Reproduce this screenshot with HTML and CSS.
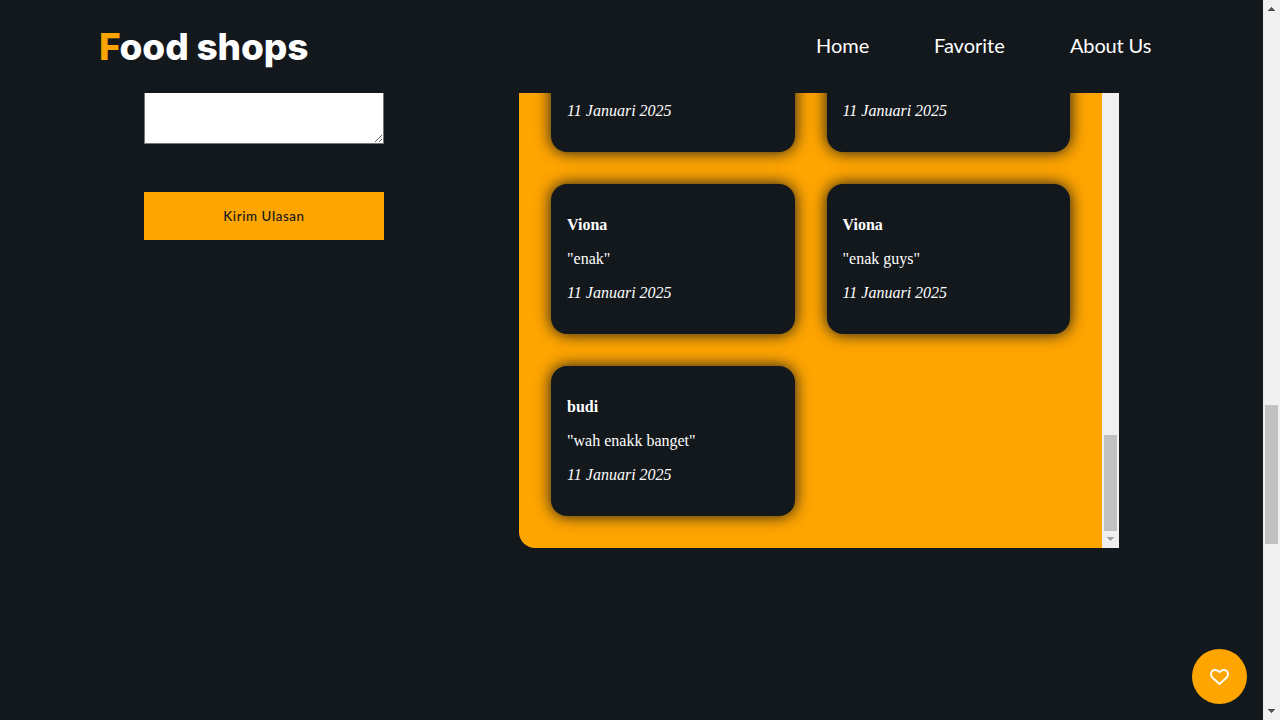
FILE: index.html
```html
<!DOCTYPE html>
<html lang="id">
<head>
<meta charset="utf-8">
<title>Food shops</title>
<link rel="stylesheet" href="styles.css">
</head>
<body>
<div class="page">
  <header class="header">
    <h1 class="brand"><span class="brand-initial">F</span>ood shops</h1>
    <nav class="nav">
      <a class="nav-home">Home</a>
      <a class="nav-favorite">Favorite</a>
      <a class="nav-about">About Us</a>
    </nav>
  </header>
  <main class="content">
    <form class="review-form">
      <textarea class="review-input" aria-label="Ulasan"></textarea>
      <button class="submit" type="button"><span>Kirim Ulasan</span></button>
    </form>
    <section class="reviews">
      <div class="review-grid">
        <article class="card card-cut"><p class="date">11 Januari 2025</p></article>
        <article class="card card-cut"><p class="date">11 Januari 2025</p></article>
        <article class="card"><p class="name">Viona</p><p class="text">"enak"</p><p class="date">11 Januari 2025</p></article>
        <article class="card"><p class="name">Viona</p><p class="text">"enak guys"</p><p class="date">11 Januari 2025</p></article>
        <article class="card"><p class="name">budi</p><p class="text">"wah enakk banget"</p><p class="date">11 Januari 2025</p></article>
      </div>
      <div class="track inner-track">
        <div class="thumb inner-thumb"></div>
        <svg class="arrow" width="7" height="4" viewBox="0 0 7 4" shape-rendering="crispEdges"><path fill="#a3a3a3" d="M0 0h7v1H0zM1 1h5v1H1zM2 2h3v1H2zM3 3h1v1H3z"/></svg>
      </div>
    </section>
  </main>
</div>
<div class="track page-track">
  <svg class="arrow" width="7" height="4" viewBox="0 0 7 4" shape-rendering="crispEdges"><path fill="#505050" d="M3 0h1v1H3zM2 1h3v1H2zM1 2h5v1H1zM0 3h7v1H0z"/></svg>
  <div class="thumb page-thumb"></div>
  <svg class="arrow" width="7" height="4" viewBox="0 0 7 4" shape-rendering="crispEdges"><path fill="#505050" d="M0 0h7v1H0zM1 1h5v1H1zM2 2h3v1H2zM3 3h1v1H3z"/></svg>
</div>
<button class="like" type="button" aria-label="Favorite">
  <svg class="heart" width="19" height="16" viewBox="0 0 20 17" fill="none" stroke="#fff" stroke-width="2" stroke-linejoin="round"><path d="M10 3.400C8.500 1.500 6.900 1 5.500 1C2.900 1 1 2.900 1 5.500c0 1.500.7 2.900 1.900 4.100L10 15.900l7.100-6.300C18.300 8.400 19 7 19 5.500C19 2.900 17.100 1 14.500 1C13.100 1 11.500 1.500 10 3.400z"/></svg>
</button>
</body>
</html>
```
FILE: styles.css
```css
* { box-sizing: border-box; }
body {
  display: flex;
  width: 1280px;
  height: 720px;
  margin: 0;
  overflow: hidden;
  background: #13181c;
  color: #fff;
}
.page { width: 1263px; display: flex; flex-direction: column; }
.header {
  height: 93px;
  flex: none;
  display: flex;
  justify-content: space-between;
  align-items: center;
  padding: 0 112px 0 99px;
}
.brand {
  margin: 0;
  font: 800 37px/56px Inter, sans-serif;
  letter-spacing: -0.15px;
  white-space: nowrap;
}
.brand-initial { color: orange; }
.nav { display: flex; gap: 64px; padding-bottom: 2px; font: 400 20px/25px Lato, sans-serif; white-space: nowrap; }
.nav-home { width: 54px; }
.nav-favorite { width: 72px; }
.nav-about { width: 81px; letter-spacing: -0.15px; }
.content {
  flex: 1;
  display: flex;
  justify-content: space-between;
  align-items: flex-start;
  padding: 0 144px;
  overflow: hidden;
}
.review-form { display: flex; flex-direction: column; gap: 48px; width: 240px; }
.review-input {
  height: 71px;
  margin: -20px 0 0;
  border: 1px solid #767676;
  border-radius: 0;
  background: #fff;
  resize: both;
}
.submit {
  height: 48px;
  padding: 0;
  border: 0;
  background: orange;
  color: #13181c;
  font: 500 13.333px/17px Lato, sans-serif;
  letter-spacing: 0.6px;
}
.reviews {
  display: flex;
  width: 600px;
  height: 455px;
  border-bottom-left-radius: 16px;
  background: orange;
  overflow: hidden;
}
.review-grid {
  flex: 1;
  display: grid;
  grid-template-columns: 1fr 1fr;
  align-content: start;
  gap: 32px;
  padding: 0 32px 32px;
}
.card {
  height: 150px;
  padding: 16px;
  border-radius: 16px;
  background: #13181c;
  box-shadow: 0 0 16px #13181c;
  font: 16px/18px "Liberation Serif", serif;
}
.card p { margin: 16px 0; white-space: nowrap; }
.card .name { font-weight: 700; }
.card .date { font-style: italic; }
.card-cut { height: 99px; margin-top: -40px; padding-top: 33px; }
.track { width: 17px; background: #f0f0f0; display: flex; flex-direction: column; align-items: center; }
.thumb { width: 13px; background: #c1c1c1; }
.inner-track { justify-content: flex-end; padding-bottom: 7px; }
.inner-thumb { height: 96px; margin-bottom: 6px; }
.page-track { padding: 7px 0; }
.page-thumb { height: 139px; margin: 394px 0 auto; }
.arrow { display: block; flex: none; }
.like {
  position: fixed;
  left: 1192px;
  top: 649px;
  width: 55px;
  height: 55px;
  display: flex;
  align-items: center;
  justify-content: center;
  padding: 0;
  border: 0;
  border-radius: 50%;
  background: orange;
}
```
